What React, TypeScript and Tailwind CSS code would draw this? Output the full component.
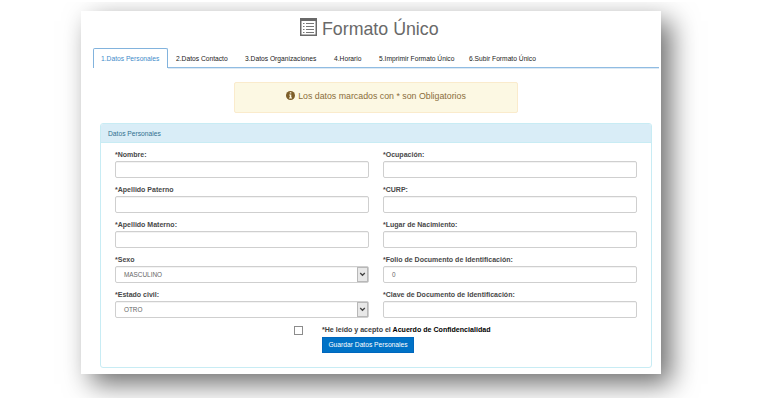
import React from 'react';

const tabs = [
  { text: '2.Datos Contacto', width: 'w-[69px]' },
  { text: '3.Datos Organizaciones', width: 'w-[89px]' },
  { text: '4.Horario', width: 'w-[45px]' },
  { text: '5.Imprimir Formato Único', width: 'w-[90px]' },
  { text: '6.Subir Formato Único', width: 'w-[80px]' },
];

type FieldProps = { label: string; value?: string; select?: boolean };

function Field({ label, value, select }: FieldProps) {
  return (
    <div className="h-[35px]">
      <div className="h-[12px] whitespace-nowrap text-[7.03px] font-bold leading-[12px] text-[#484848]">{label}</div>
      <div className="flex h-[17px] items-center justify-between rounded-[2px] border border-[#cfcfcf] bg-white pl-[8px] text-[6.4px] text-[#666] shadow-[inset_0_1px_0_#f3f3f3]">
        <span>{value}</span>
        {select && (
          <span className="flex h-[15px] w-[11px] items-center justify-center border border-[#b8b8b8] bg-[#e8e8e8]">
            <svg width="7" height="5" viewBox="0 0 7 5" fill="none" stroke="#444" strokeWidth="1.3">
              <path d="M1.2 1l2.3 2.3L5.8 1" />
            </svg>
          </span>
        )}
      </div>
    </div>
  );
}

function ListIcon() {
  return (
    <svg width="17" height="18" viewBox="0 0 17 18" className="shrink-0">
      <rect x=".75" y=".75" width="15.5" height="16.5" fill="#fff" stroke="#696969" strokeWidth="1.5" />
      <path d="M0 0h17v3H0z" fill="#696969" />
      <path d="M3 5.5h1.5M3 8.5h1.5M3 11.5h1.5M3 14.5h1.5M6 5.5h8M6 8.5h8M6 11.5h8M6 14.5h8" stroke="#777" />
    </svg>
  );
}

export default function App() {
  return (
    <div className="h-[400px] w-[760px] overflow-hidden bg-white py-[2px] font-['Liberation_Sans',Arial,sans-serif]">
      <div className="h-[396px] overflow-hidden pl-[81px] pt-[9px]">
        <main className="h-[363px] w-[580px] bg-white pl-[12px] pt-[7px] shadow-[10px_10px_25px_rgba(0,0,0,0.57)]">
          <h1 className="ml-[207px] flex h-[22px] gap-[5px] whitespace-nowrap text-[17.8px] leading-[23px] text-[#696969]">
            <ListIcon />
            <span>Formato Único</span>
          </h1>
          <nav className="mt-[8px] flex h-[20px] w-[566px] items-stretch whitespace-nowrap text-[6.7px] leading-[19px] text-[#222]">
            <div className="w-[75px] rounded-t-[2px] border border-b-0 border-[#82b3dd] pl-[7px] text-[#428bca]">1.Datos Personales</div>
            <div className="flex flex-1 border-b border-[#90bce2] pl-[8px] pt-px shadow-[0_1px_0_#dce9f5]">
              {tabs.map((tab) => (
                <div key={tab.text} className={tab.width}>{tab.text}</div>
              ))}
            </div>
          </nav>
          <div className="ml-[141px] mt-[14px] flex h-[31px] w-[284px] justify-center gap-[3px] rounded-[2px] border border-[#faebcc] bg-[#fcf8e3] pt-[7px] text-[8.8px] leading-[13px] text-[#8a6d3b]">
            <svg width="9" height="9" viewBox="0 0 9 9" className="mt-px">
              <circle cx="4.5" cy="4.5" r="4.5" fill="#7d5e29" />
              <path d="M3.8 1.3h1.5v1.3H3.8zM3.2 3.6h2.1v2.8H6v1H3v-1h.8V4.5h-.6z" fill="#fcf8e3" />
            </svg>
            <span>Los datos marcados con * son Obligatorios</span>
          </div>
          <section className="ml-[7px] mt-[10px] h-[245px] w-[552px] rounded-[3px] border border-[#c8ecf4]">
            <header className="h-[19px] rounded-t-[2px] border-b border-[#c8ecf4] bg-[#d9edf7] pl-[7px] text-[6.7px] leading-[19px] text-[#31708f]">Datos Personales</header>
            <div className="grid grid-cols-[254px_254px] gap-x-[14px] pl-[14px] pt-[6px]">
              <Field label="*Nombre:" />
              <Field label="*Ocupación:" />
              <Field label="*Apellido Paterno" />
              <Field label="*CURP:" />
              <Field label="*Apellido Materno:" />
              <Field label="*Lugar de Nacimiento:" />
              <Field label="*Sexo" value="MASCULINO" select />
              <Field label="*Folio de Documento de Identificación:" value="0" />
              <Field label="*Estado civil:" value="OTRO" select />
              <Field label="*Clave de Documento de Identificación:" />
            </div>
            <div className="flex pl-[193px]">
              <div className="mt-[2px] size-[9px] border border-[#8c8c8c] bg-white" />
              <div className="ml-[19px]">
                <div className="h-[13px] whitespace-nowrap text-[7.08px] font-bold leading-[12px] text-[#404040]">
                  *He leído y acepto el <span className="text-black">Acuerdo de Confidencialidad</span>
                </div>
                <button className="block h-[16px] w-[92px] whitespace-nowrap border border-[#0067bd] bg-[#0072c6] text-center text-[6.7px] leading-[14px] text-white">Guardar Datos Personales</button>
              </div>
            </div>
          </section>
        </main>
      </div>
    </div>
  );
}
